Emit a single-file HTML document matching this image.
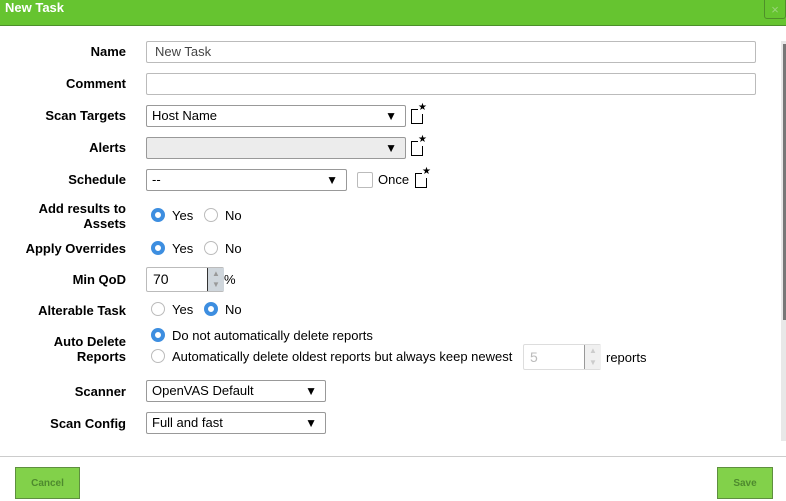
<!DOCTYPE html><html><head><style>
body{margin:0;width:786px;height:501px;overflow:hidden;background:#fff;font-family:"Liberation Sans",sans-serif;font-size:13px;color:#000;position:relative}
.a{position:absolute}
.hd{left:0;top:0;width:786px;height:25px;background:#66c430;border-bottom:1px solid #4c8f2a}
.hd span{position:absolute;left:5px;top:0;color:#fff;font-weight:bold;font-size:13px}
.x{left:764px;top:-4px;width:22px;height:23px;border:1px solid #4f8f2a;border-radius:3px;background:#66c430;color:#9bd47c;text-align:center;font-size:13px;line-height:26px;box-sizing:border-box}
.l{width:126px;text-align:right;font-weight:bold;left:0}
.in{border:1px solid #bbb;border-radius:2px;height:20px;box-sizing:border-box;background:#fff;padding-left:8px;line-height:20px}
.sel{border:1px solid #999;border-radius:2px;height:22px;box-sizing:border-box;background:#fff;padding-left:5px;line-height:20px}
.sel b{position:absolute;right:8px;top:0;font-weight:normal;font-size:12px}
.ic{width:12px;height:15px;border:1px solid #000;border-top:none;box-sizing:border-box}
.ic:before{content:"";position:absolute;left:-1px;top:0;width:8px;border-top:1px solid #000}
.ic:after{content:"★";position:absolute;left:6px;top:-7px;font-size:10px;background:#fff;line-height:12px}
.r{width:14px;height:14px;border-radius:50%;border:1px solid #bbb;box-sizing:border-box;background:#fff}
.r.on{border:4px solid #3d8ee0}
.btn{background:#82d14a;border:1px solid #5e8f3f;box-sizing:border-box;color:#4e8a2e;font-size:10px;text-align:center;font-weight:bold}
</style></head><body>
<div class="a hd"><span>New Task</span></div>
<div class="a x">×</div>
<div class="a" style="left:781px;top:41px;width:5px;height:400px;background:#e8e8e8"></div>
<div class="a" style="left:783px;top:44px;width:3px;height:276px;background:#777"></div>

<div class="a l" style="top:44px">Name</div>
<div class="a in" style="left:146px;top:41px;width:610px;height:22px;color:#444">New Task</div>
<div class="a l" style="top:76px">Comment</div>
<div class="a in" style="left:146px;top:73px;width:610px;height:22px"></div>
<div class="a l" style="top:108px">Scan Targets</div>
<div class="a sel" style="left:146px;top:105px;width:260px">Host Name<b>▼</b></div>
<div class="a ic" style="left:411px;top:109px"></div>
<div class="a l" style="top:140px">Alerts</div>
<div class="a sel" style="left:146px;top:137px;width:260px;background:#ececec"><b>▼</b></div>
<div class="a ic" style="left:411px;top:141px"></div>
<div class="a l" style="top:172px">Schedule</div>
<div class="a sel" style="left:146px;top:169px;width:201px">--<b>▼</b></div>
<div class="a" style="left:357px;top:172px;width:16px;height:16px;border:1px solid #bbb;border-radius:2px;box-sizing:border-box"></div>
<div class="a" style="left:378px;top:172px">Once</div>
<div class="a ic" style="left:415px;top:173px"></div>

<div class="a l" style="top:201px;line-height:15px">Add results to<br>Assets</div>
<div class="a r on" style="left:151px;top:208px"></div><div class="a" style="left:172px;top:208px">Yes</div>
<div class="a r" style="left:204px;top:208px"></div><div class="a" style="left:225px;top:208px">No</div>
<div class="a l" style="top:241px">Apply Overrides</div>
<div class="a r on" style="left:151px;top:241px"></div><div class="a" style="left:172px;top:241px">Yes</div>
<div class="a r" style="left:204px;top:241px"></div><div class="a" style="left:225px;top:241px">No</div>
<div class="a l" style="top:272px">Min QoD</div>
<div class="a in" style="left:146px;top:267px;width:78px;height:25px;font-size:14px;line-height:23px;padding-left:6px">70</div>
<div class="a" style="left:207px;top:268px;width:16px;height:23px;background:#cfd6dc;border-left:1px solid #333;color:#999;font-size:8px;text-align:center;line-height:11px">▲<br>▼</div>
<div class="a" style="left:224px;top:272px">%</div>
<div class="a l" style="top:303px">Alterable Task</div>
<div class="a r" style="left:151px;top:302px"></div><div class="a" style="left:172px;top:302px">Yes</div>
<div class="a r on" style="left:204px;top:302px"></div><div class="a" style="left:225px;top:302px">No</div>
<div class="a l" style="top:334px;line-height:15px">Auto Delete<br>Reports</div>
<div class="a r on" style="left:151px;top:328px"></div><div class="a" style="left:172px;top:328px">Do not automatically delete reports</div>
<div class="a r" style="left:151px;top:349px"></div><div class="a" style="left:172px;top:349px">Automatically delete oldest reports but always keep newest</div>
<div class="a in" style="left:523px;top:344px;width:78px;height:26px;color:#bbb;font-size:14px;line-height:24px;padding-left:6px;border-color:#ddd">5</div>
<div class="a" style="left:584px;top:345px;width:16px;height:24px;background:#f0f0f0;border-left:1px solid #999;color:#ccc;font-size:8px;text-align:center;line-height:12px">▲<br>▼</div>
<div class="a" style="left:606px;top:350px">reports</div>
<div class="a l" style="top:384px">Scanner</div>
<div class="a sel" style="left:146px;top:380px;width:180px">OpenVAS Default<b>▼</b></div>
<div class="a l" style="top:416px">Scan Config</div>
<div class="a sel" style="left:146px;top:412px;width:180px">Full and fast<b>▼</b></div>

<div class="a" style="left:0;top:456px;width:786px;border-top:1px solid #ccc"></div>
<div class="a btn" style="left:15px;top:467px;width:65px;height:32px;line-height:32px">Cancel</div>
<div class="a btn" style="left:717px;top:467px;width:56px;height:32px;line-height:32px">Save</div>
</body></html>
